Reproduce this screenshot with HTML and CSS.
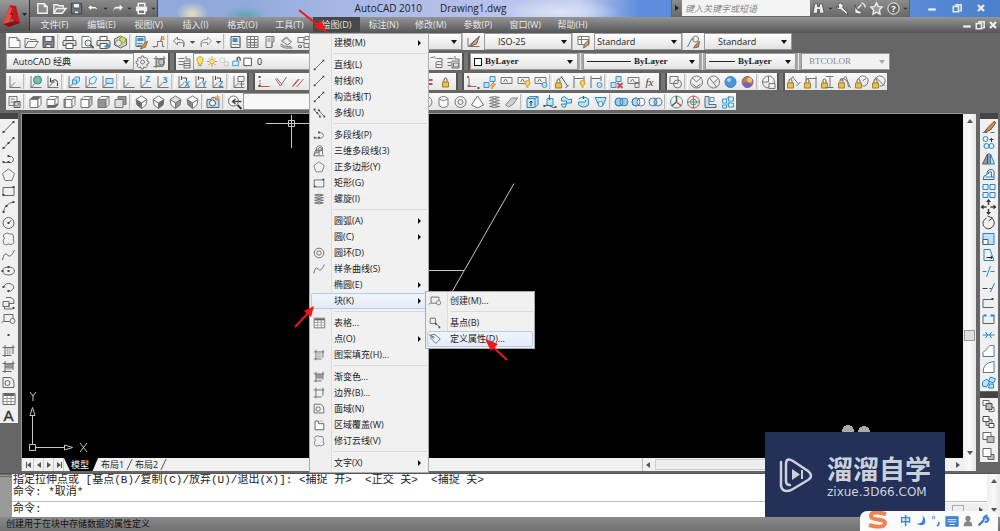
FILE: index.html
```html
<!DOCTYPE html>
<html lang="zh-CN">
<head>
<meta charset="utf-8">
<title>AutoCAD 2010 - Drawing1.dwg</title>
<link rel="stylesheet" href="styles.css">
</head>
<body>
<div class="app">
  <header class="titlebar">
    <button class="app-button" aria-label="AutoCAD">
      <svg viewBox="0 0 30 31"><path d="M3 24 10 5l6 1 4 17-5 1-2-5-4 1-1 6z" fill="#c4171c"/><path d="M10 5 3 24l5 1 5-13z" fill="#e84a45"/><path d="m10 15 2-5 1 5zM3 24l6 3 11-4-5-2z" fill="#8d0d12"/><path d="M22 13h5l-2.500 3z" fill="#222"/></svg>
    </button>
    <div class="quick light" data-icons="new open save undo drop redo drop print drop"></div>
    <h1 class="caption"><span>AutoCAD 2010</span><span>Drawing1.dwg</span></h1>
    <div class="infocenter">
      <span class="play"></span>
      <input class="search" type="text" aria-label="搜索" placeholder="键入关键字或短语">
      <div class="info-icons light" data-icons="binoc drop key dish star help drop"></div>
    </div>
    <div class="window-buttons" data-icons="wmin wmax wclose"></div>
  </header>

  <nav class="menubar">
    <div class="menu-head"><button>文件(F)</button></div>
    <div class="menu-head"><button>编辑(E)</button></div>
    <div class="menu-head"><button>视图(V)</button></div>
    <div class="menu-head"><button>插入(I)</button></div>
    <div class="menu-head"><button>格式(O)</button></div>
    <div class="menu-head"><button>工具(T)</button></div>
    <div class="menu-head open"><button>绘图(D)</button>
      <div class="menu">
        <button class="item more">建模(M)</button>
        <hr>
        <button class="item" data-icon="line">直线(L)</button>
        <button class="item" data-icon="line">射线(R)</button>
        <button class="item" data-icon="xline">构造线(T)</button>
        <button class="item" data-icon="mline">多线(U)</button>
        <hr>
        <button class="item" data-icon="pline">多段线(P)</button>
        <button class="item" data-icon="pline3">三维多段线(3)</button>
        <button class="item" data-icon="polygon">正多边形(Y)</button>
        <button class="item" data-icon="rect">矩形(G)</button>
        <button class="item" data-icon="helix">螺旋(I)</button>
        <hr>
        <button class="item more">圆弧(A)</button>
        <button class="item more">圆(C)</button>
        <button class="item" data-icon="donut">圆环(D)</button>
        <button class="item" data-icon="spline">样条曲线(S)</button>
        <button class="item more">椭圆(E)</button>
        <div class="branch">
          <button class="item more active">块(K)</button>
          <div class="menu submenu">
            <button class="item" data-icon="block">创建(M)...</button>
            <hr>
            <button class="item" data-icon="base">基点(B)</button>
            <button class="item active" data-icon="tag">定义属性(D)...</button>
          </div>
        </div>
        <hr>
        <button class="item" data-icon="table">表格...</button>
        <button class="item more">点(O)</button>
        <button class="item" data-icon="hatch">图案填充(H)...</button>
        <hr>
        <button class="item" data-icon="gradient">渐变色...</button>
        <button class="item" data-icon="boundary">边界(B)...</button>
        <button class="item" data-icon="region">面域(N)</button>
        <button class="item" data-icon="wipe">区域覆盖(W)</button>
        <button class="item" data-icon="cloud">修订云线(V)</button>
        <hr>
        <button class="item more">文字(X)</button>
      </div>
    </div>
    <div class="menu-head"><button>标注(N)</button></div>
    <div class="menu-head"><button>修改(M)</button></div>
    <div class="menu-head"><button>参数(P)</button></div>
    <div class="menu-head"><button>窗口(W)</button></div>
    <div class="menu-head"><button>帮助(H)</button></div>
    <div class="mdi" data-icons="wmin wmax wclose"></div>
  </nav>

  <section class="toolbars">
    <div class="row">
      <div class="tools" data-icons="new open save | print preview publish dwf | match brush | undo drop redo drop | props grid palette sheets blocks"></div>
      <span class="grip"></span>
      <label class="combo text-style"><select aria-label="文字样式"><option>Standard</option></select></label>
      <div class="tools wide" data-icons="dimstyle"></div>
      <label class="combo style"><select aria-label="标注样式"><option>ISO-25</option></select></label>
      <div class="tools wide" data-icons="tablestyle"></div>
      <label class="combo style near"><select aria-label="表格样式"><option>Standard</option></select></label>
      <div class="tools wide" data-icons="leader"></div>
      <label class="combo style"><select aria-label="多重引线样式"><option>Standard</option></select></label>
    </div>
    <div class="row">
      <label class="combo workspace-name"><select aria-label="工作空间"><option>AutoCAD 经典</option></select></label>
      <div class="tools" data-icons="gear wspace"></div>
      <span class="grip"></span>
      <div class="tools" data-icons="layers"></div>
      <label class="combo layer"><span class="layer-icons" data-icons="bulb sun freeze unlock square"></span><select aria-label="图层"><option>0</option></select></label>
      <div class="tools" data-icons="layerprev layerstate"></div>
      <span class="grip"></span>
      <label class="combo serif color"><span class="swatch"></span><select aria-label="颜色"><option>ByLayer</option></select></label>
      <span class="grip thin"></span>
      <label class="combo serif linetype"><span class="sample"></span><select aria-label="线型"><option>ByLayer</option></select></label>
      <span class="grip thin"></span>
      <label class="combo serif weight"><span class="sample short"></span><select aria-label="线宽"><option>ByLayer</option></select></label>
      <span class="grip thin"></span>
      <label class="combo serif off"><select aria-label="打印样式" disabled><option>BTCOLOR</option></select></label>
    </div>
    <div class="row">
      <div class="tools" data-icons="ucs | world ucsprev | ucsface ucsobj ucsview | ucs ucsz ucs3 | ucsx ucsy ucszr | ucsapply"></div>
      <span class="grip"></span>
      <div class="tools constraints"><span data-icons="perp check parallel"></span><span data-icons="equal lock"></span></div>
      <span class="grip"></span>
      <div class="tools" data-icons="coinc auto show showall hideall | lockdim lockone locktwo | delcon dimcon fx"></div>
      <span class="grip"></span>
      <div class="tools" data-icons="wire2d | wire3d hidden ball real | styles"></div>
      <span class="grip"></span>
      <div class="tools" data-icons="cal chor cver cang crad cdia"></div>
    </div>
    <div class="row">
      <div class="tools" data-icons="views | boxtop boxbottom boxleft boxright boxfront boxback | isosw isose isone isonw | camera | zoomprev"></div>
      <label class="combo view"><select aria-label="视图"><option></option></select></label>
      <span class="grip"></span>
      <div class="tools modeling" data-icons="circle cyl donut pyramid helix plane | extrude presspull sweep revolve loft | union subtract intersect | move3d rotate3d align3d array3d"></div>
    </div>
  </section>

  <main class="workspace">
    <aside class="side" data-icons="line xline pline polygon rect arc circle2 cloud spline ellipse earc insert block point hatch gradient region table text"></aside>
    <section class="document">
      <div class="canvas">
        <svg class="drawing" width="941" height="344">
          <g fill="none" stroke="#c8c8c8">
            <path d="M244 9.500h43M269.500 1v33M266.500 6.500h6v6h-6zM492 69.500 430 178M400 156.500h42M7.500 330.500h6v6h-6zM10.500 330v-29M8 301.500h5l-2.500-8zM14 333.500h28M42.500 331v5l8-2.500z"/>
            <path d="m8 278 3 4 3-4M11 282v5M58 329l7 9M65 329l-7 9"/>
          </g>
        </svg>
      </div>
      <div class="tabs">
        <button class="nav first" aria-label="第一个"></button><button class="nav prev" aria-label="上一个"></button><button class="nav next" aria-label="下一个"></button><button class="nav last" aria-label="最后一个"></button>
        <button class="tab current">模型</button><button class="tab">布局1</button><button class="tab">布局2</button>
        <div class="hscroll"><i class="tri left"></i><b class="thumb"></b><i class="tri right"></i></div>
      </div>
    </section>
    <div class="vscroll"><i class="tri up"></i><b class="thumb"></b><i class="tri down"></i></div>
    <div class="right-tools">
      <aside class="side" data-icons="erase copy mirror offset array move rotate scale stretch trim extend breakpt break join chamfer fillet explode"></aside>
      <aside class="side order" data-icons="front back above under"></aside>
    </div>
  </main>

  <section class="command">
    <div class="command-grip"></div>
    <div class="command-text">
      <pre class="history">指定拉伸点或 [基点(B)/复制(C)/放弃(U)/退出(X)]: &lt;捕捉 开&gt;  &lt;正交 关&gt;  &lt;捕捉 关&gt;
命令: *取消*</pre>
      <div class="prompt"><label for="cmd">命令:</label><input id="cmd" type="text"><div class="cmd-scroll"><i class="tri left"></i><b class="thumb"></b><i class="tri right"></i></div></div>
    </div>
    <div class="vscroll"><i class="tri up"></i><i class="tri down"></i></div>
  </section>
  <footer class="status">创建用于在块中存储数据的属性定义</footer>

  <div class="ears"></div>
  <div class="brand">
    <svg viewBox="0 0 34 38"><g fill="none" stroke="#ccd0dc" stroke-width="2.500" stroke-linecap="round"><path d="M2 6v24q1 5 6 5 3 0 6-2l15-9q6-4 0-9L14 5Q7 1 7 8v17q0 4 4 4"/></g><path d="m13 13 8 5.500-8 5.500zM22 14h2v9h-2z" fill="#ccd0dc"/></svg>
    <div class="brand-text"><strong>溜溜自学</strong><span>zixue.3D66.COM</span></div>
  </div>
  <div class="ime"><svg class="sogou" viewBox="0 0 24 20"><path d="M20 3Q5-1 5 5c0 5 14 2 14 7 0 5-10 4-16 2" fill="none" stroke="#ef8354" stroke-width="4"/></svg><span class="zh">中</span><span class="ime-icons" data-icons="moon comma keyboard person wrench"></span></div>
  <svg class="marks" width="540" height="370"><g stroke="#f01818" stroke-width="2" fill="#f01818"><path d="m299 10 21 17M295 327l15-16M507 360l-15-14"/><path stroke="none" d="m327 32-13-5 7-7zM314 306l-3 11-7-6zM485 339l13 5-7 7z"/></g></svg>
</div>
<script src="script.js"></script>
</body>
</html>
```
FILE: styles.css
```css
* { box-sizing: border-box; }
body { margin: 0; background: #666; font: 9px/16px "Open Sans", "Noto Sans CJK SC", sans-serif; color: #222; }
button, input, select { font: inherit; color: inherit; margin: 0; padding: 0; border: 0; background: none; border-radius: 0; }
svg { display: block; }
.app { position: relative; min-height: 100vh; display: flex; flex-direction: column; overflow: hidden; }

.titlebar { height: 17px; display: flex; align-items: stretch; background:
  radial-gradient(ellipse 16px 12px at 192px 14px, #e8dfc0, transparent),
  radial-gradient(ellipse 22px 10px at 245px 16px, #5fa3b4, transparent),
  radial-gradient(ellipse 60px 14px at 560px 12px, #dce4f8, transparent),
  linear-gradient(90deg, #8fa8d8 0, #93abdc 25%, #a9b9e6 36%, #b9c3ec 50%, #c0cbee 58%, #5c8cdb 64%, #5b8bd6 90%, #4a80cc); }
.app-button { width: 30px; height: 31px; position: relative; z-index: 2; background: linear-gradient(#999, #555); border-right: 1px solid #333; }
.app-button svg { width: 30px; height: 31px; }
.quick { display: flex; flex: none; align-items: center; width: 128px; padding-left: 4px; background: linear-gradient(#8a8a8a, #666); border-right: 1px solid #444; }
.light button { flex: none; width: 17px; }
.light svg { width: 17px; height: 15px; }
.light .drop { width: 7px; }
.light .drop svg { width: 7px; }
.caption { margin: 0; flex: 1; display: flex; gap: 18px; justify-content: center; padding-left: 32px; font-size: 10px; font-weight: 400; line-height: 17px; }
.infocenter { display: flex; flex: none; background: linear-gradient(#8c8c8c, #6a6a6a); width: 239px; border: 1px solid #666; border-top: 0; }
.play { width: 10px; padding: 5px 3px; }
.play::before { content: ""; display: block; border: 3px solid transparent; border-left: 4px solid #222; border-right: 0; }
.search { width: 128px; background: #f4f4f4; padding-left: 3px; font-style: italic; line-height: 15px; }
.search::placeholder { color: #888; }
.info-icons { display: flex; align-items: center; }
.window-buttons { width: 90px; flex: none; display: flex; justify-content: space-between; padding: 0 13px 2px 16px; align-items: center; }

.menubar { position: relative; z-index: 1; height: 16px; display: flex; padding-left: 31px; background: linear-gradient(#959595, #565656); color: #e6e6e6; }
.menu-head { position: relative; }
.menu-head > button { padding: 0 8px; height: 15px; min-width: 47px; white-space: nowrap; line-height: 15px; }
.menu-head.open > button { background: #484848; }
.mdi { margin-left: auto; display: flex; gap: 1px; align-items: center; padding-right: 1px; }
.mdi button, .window-buttons button { width: 12px; }
.mdi svg, .window-buttons svg { width: 12px; height: 12px; }
.menu { position: absolute; top: 16px; left: -4px; width: 120px; padding: 1px; background: #f1f1f1; border: 1px solid #aaa; color: #222; box-shadow: inset 21px 0 0 #efefef, inset 22px 0 0 #dedede; line-height: 16px; }
.menu hr { margin: 2px 0 3px 23px; border: 0; height: 1px; background: #dadada; }
.item { display: flex; align-items: center; width: 100%; height: 16px; padding-left: 23px; text-align: left; white-space: nowrap; position: relative; }
.item svg { position: absolute; left: 1px; top: 1px; width: 14px; height: 14px; }
.item.more::after { content: ""; margin-left: auto; margin-right: 6px; border: 3px solid transparent; border-left: 3px solid #111; border-right: 0; }
.item.active { background: linear-gradient(#f1f5fc, #e3ebf8); box-shadow: inset 0 0 0 1px #b4cdec; border-radius: 2px; }
.branch { position: relative; }
.submenu { left: 114px; top: -2px; width: 110px; z-index: 2; }

.toolbars { display: flex; flex-direction: column; gap: 3px; padding-left: 6px; padding-bottom: 3px; }
.row { display: flex; height: 17px; align-items: stretch; }
.tools { display: flex; flex: none; background: linear-gradient(#fafafa, #e6e6e6); }
.tools button { width: 17px; height: 17px; }
.tools .drop { width: 9px; }
.tools.wide { width: 22px; justify-content: center; border-left: 1px solid #bbb; }
.tools svg { width: 17px; height: 16px; opacity: .88; }
.tools .drop svg { width: 9px; }
.rule { width: 4px; height: 15px; margin-top: 1px; border-left: 1px solid #bbb; border-right: 1px solid #fff; background: #e8e8e8; flex: none; }
.grip { width: 8px; flex: none; border-left: 2px solid #555; border-right: 2px solid #555; background: #757575; }
.grip.thin { width: 5px; border-color: #aaa; background: #e8e8e8; }
.constraints { width: 201px; justify-content: space-between; padding-right: 2px; }
.constraints span, .layer-icons { display: flex; }
.combo { flex: none; display: flex; align-items: center; padding: 0 4px 0 6px; background: linear-gradient(#fff, #e2e2e2); border: 1px solid #999; }
.combo::after { content: ""; border: 3px solid transparent; border-top: 4px solid #111; border-bottom: 0; }
.combo select { appearance: none; flex: 1; min-width: 0; line-height: 15px; outline: 0; }
.text-style { width: 142px; }
.style { width: 88px; padding-left: 13px; }
.style.near { padding-left: 2px; }
.workspace-name { width: 128px; }
.layer { width: 235px; padding-left: 0; }
.layer-icons svg { width: 12px; height: 15px; }
.layer-icons button { width: 12px; }
.layer select { padding-left: 3px; }
.serif { font-family: "Liberation Serif", serif; font-weight: 700; padding-left: 3px; }
.swatch { width: 8px; height: 8px; border: 1px solid #111; background: #fff; margin-right: 3px; }
.sample { width: 44px; height: 1px; background: #222; margin-right: 3px; }
.sample.short { width: 26px; }
.color { width: 108px; } .linetype { width: 117px; } .weight { width: 91px; }
.off { width: 89px; padding-left: 7px; background: #f2f2f2; font-weight: 400; color: #888; }
.off select { opacity: 1; }
.off::after { border-top-color: #aaa; }
.view { width: 80px; background: #f8f8f8; }
.modeling { width: 405px; justify-content: flex-end; }

.workspace { flex: 1; display: flex; }
.side { width: 18px; display: flex; flex-direction: column; align-self: flex-start; border-top: 6px solid #444; background: #f0f0f0; }
.side button { height: 16px; width: 17px; }
.side svg { width: 17px; height: 16px; }
.document { flex: 1; min-width: 0; display: flex; flex-direction: column; margin-left: 3px; border-left: 1px solid #999; border-top: 1px solid #999; }
.canvas { flex: 1; position: relative; background: #000; overflow: hidden; }
.drawing { position: absolute; left: 0; top: 0; }
.tabs { height: 13px; display: flex; align-items: stretch; background: #f0f0f0; line-height: 12px; padding-left: 2px; }
.nav { width: 10px; display: flex; align-items: center; justify-content: center; border-right: 1px solid #ccc; }
.nav::before { content: ""; border: 3px solid transparent; }
.nav.prev::before, .nav.first::before { border-right: 4px solid #555; border-left: 0; }
.nav.next::before, .nav.last::before { border-left: 4px solid #555; border-right: 0; }
.nav.first::before { box-shadow: -1px 0 0 #555; }
.nav.last::before { box-shadow: 1px 0 0 #555; }
.tab { width: 34px; padding-left: 3px; text-align: left; position: relative; color: #222; }
.tab::after { content: ""; position: absolute; right: 2px; top: 1px; height: 11px; border-right: 1px solid #555; transform: skewX(-25deg); }
.tab.current { padding-left: 7px; background: #000; color: #fff; clip-path: polygon(0 0, 100% 0, 84% 100%, 18% 100%); }
.hscroll { margin-left: auto; width: 321px; background: #f0f0f0; border-left: 1px solid #bbb; display: flex; align-items: center; gap: 5px; padding: 0 3px; }
.hscroll .thumb { width: 190px; height: 11px; background: #eee; border: 1px solid #ccc; }
.hscroll .right, .cmd-scroll .right { margin-left: auto; }
.tri { flex: none; border: 3px solid transparent; width: 0; height: 0; }
.tri.up { border-bottom: 4px solid #555; border-top: 0; }
.tri.down { border-top: 4px solid #555; border-bottom: 0; }
.tri.left { border-right: 4px solid #555; border-left: 0; }
.tri.right { border-left: 4px solid #555; border-right: 0; }
.vscroll { width: 13px; flex: none; background: linear-gradient(90deg, #eee, #f8f8f8, #e8e8e8); display: flex; flex-direction: column; justify-content: space-between; align-items: center; padding: 5px 0; }
.workspace > .vscroll { margin-top: 1px; padding-bottom: 16px; }
.workspace > .vscroll .thumb { width: 11px; height: 11px; margin-top: 194px; margin-bottom: 98px; border: 1px solid #999; background: #e0e0e0; }
.right-tools { width: 24px; padding-left: 4px; }
.order { margin-top: 1px; }

.command { height: 44px; margin-top: 2px; display: flex; background: #fff; border-top: 1px solid #555; }
.command-grip { width: 12px; background: #999; border-top: 3px double #666; }
.command-text { flex: 1; min-width: 0; font: 11px/12px "Liberation Mono", "Noto Sans CJK SC", monospace; }
.history { margin: 0; height: 28px; padding-left: 1px; font: inherit; border-bottom: 1px solid #bbb; overflow: hidden; }
.prompt { display: flex; height: 15px; line-height: 15px; padding-left: 1px; align-items: center; }
.prompt input { flex: 1; outline: 0; }
.cmd-scroll { width: 330px; height: 14px; background: #eee; display: flex; align-items: center; gap: 3px; padding: 0 4px; }
.cmd-scroll .left { visibility: hidden; }
.cmd-scroll .thumb { width: 12px; height: 10px; border: 1px solid #aaa; margin-left: auto; }
.cmd-scroll .right { margin-left: 12px; }
.cmd-scroll { width: 215px; }
.status { height: 14px; padding-left: 6px; line-height: 14px; background: linear-gradient(#8a8a8a, #707070); color: #111; }

.ears { position: absolute; left: 842px; bottom: 94px; width: 28px; height: 12px; background: radial-gradient(circle at 6px 6px, #aaa 6px, transparent 6px), radial-gradient(circle at 22px 7px, #aaa 6px, transparent 6px); }
.brand { position: absolute; left: 765px; bottom: 14px; width: 180px; height: 85px; padding: 0 14px; display: flex; align-items: center; gap: 14px; background: #233057; color: #ccd0dc; }
.brand svg { width: 34px; height: 38px; flex: none; }
.brand-text { display: flex; flex-direction: column; white-space: nowrap; }
.brand-text strong { font: 700 26px/34px "Noto Sans CJK SC", sans-serif; }
.brand-text span { font: 12px/14px "DejaVu Sans", sans-serif; }
.ime { position: absolute; left: 860px; bottom: 0; width: 138px; height: 20px; padding: 0 8px 0 6px; display: flex; align-items: center; background: #fafafa; border-radius: 7px 7px 0 0; color: #3e82d4; }
.sogou { width: 24px; height: 20px; }
.zh { margin-left: 10px; font-size: 11px; font-weight: 700; }
.ime-icons { display: flex; flex: 1; justify-content: space-between; padding-left: 3px; }
.ime-icons button { width: 14px; height: 14px; }
.ime-icons svg { width: 14px; height: 14px; }
.marks { position: absolute; left: 0; top: 0; z-index: 3; pointer-events: none; }
```
FILE: script.js
```javascript
const G = '#666', B = '#2684cc', Y = '#e3a51c', R = '#c93636', L = '#bfe3f8';
const p = (d, s = G, f = 'none', w = 1) => `<path d="${d}" stroke="${s}" fill="${f}" stroke-width="${w}"/>`;
const c = (x, y, r, s = G, f = 'none') => `<circle cx="${x}" cy="${y}" r="${r}" stroke="${s}" fill="${f}"/>`;
const dots = (...a) => a.map(([x, y]) => p(`M${x - 1} ${y - 1}h2v2h-2z`, 'none', '#444')).join('');
const t = (s, x, y, col = B, size = 8) => `<text x="${x}" y="${y}" font-size="${size}" font-weight="700" fill="${col}" stroke="none">${s}</text>`;
const axes = p('M3.5 2v11.500H14M3.500 13.500l5-5');
const padlock = (x, y) => p(`M${x + 1.5} ${y}v-2q0-2 1.500-2t1.500 2v2`, '#5b4a16') + p(`M${x} ${y}h6v5h-6z`, '#9b7310', '#edbb3a');
const smallBulb = c(12, 9, 2.500, '#d28b12', '#ffd24a') + p('M11 13h2', '#8a6a20');
const glass = p('M2.500 3.500h11v6h-11zM5 8l2-3 2 3');
const cube = (f1, f2, f3) => p('M2.500 5.500h8v8h-8z', G, f1) + p('m2.500 5.500 3-3h8l-3 3z', G, f2) + p('m10.500 5.500 3-3v8l-3 3z', G, f3);
const iso = (a, b, d) => p('m8 2 5.500 3.500L8 9 2.500 5.500z', G, a) + p('M2.500 5.500 8 9v5.500L3.500 11z', G, b) + p('M13.500 5.500 8 9v5.500l4.500-3.500z', G, d);
const hatchBox = p('M4.500 2v12M12.500 2v9M2 4.500h12M2 12.500h9');
const printer = p('M4.500 6V2.500h7V6M4.500 10.500v4h7v-4', '#444', '#fff') + p('M2.500 6.500q-1 0-1 1v4h3v-2h7v2h3v-4q0-1-1-1z', '#444', '#ddd');

const icons = {
  new: p('M2.500 3.500h8l3 3v7h-11zM10.500 3.500v3h3', G, '#fff'),
  open: p('M1.500 13.500v-9h4l1 1h6v2M1.500 13.500l3-6h10.500l-4 6z', G, '#f4f4f4'),
  save: p('M2.500 2.500h11v11h-11z', '#3a3d44', '#72777f') + p('M4.500 2.500h7v5h-7zM5.500 10.500h5v3h-5z', '#4a4d54', '#e8eef4'),
  undo: p('M6 3 2 7l4 4V8.500h4q3 0 2 4.500 3-8-6-7.500z', '#666', '#f6f6f6'),
  redo: p('m10 3 4 4-4 4V8.500H6q-3 0-2 4.500-3-8 6-7.500z', '#888', '#f6f6f6'),
  drop: '<path d="M3 6h10l-5 5z" fill="#333"/>',
  print: printer,
  preview: p('M3.500 2.500h7l2 2v9h-9z', G, '#fff') + c(9.500, 9, 3, '#555', '#e8f2fa') + p('m12 11 3 3', '#444', 'none', 2),
  publish: printer + p('M9 11.500h3v-2.500l3.500 3.500-3.500 3v-2H9z', 'none', B),
  dwf: p('m8 2 6 3v6l-6 3-6-3V5z', '#555', '#c7d7a0') + c(10, 6, 3, '#86a628', '#cddb52') + c(6, 9, 3, '#6a7a85', '#e8edf0'),
  match: p('M2.500 2.500h9v10h-9z', '#2567a5', '#dceaf5') + p('M4 4h6v3H4z', 'none', B) + p('M4 9.500h5M4 11.500h4') + p('m14 7-5 4-2 4 5-2z', '#8a5720', '#d8873b'),
  brush: p('M3 12.500h4v-5h5v5h2M2 12l2 2M12 3l-2 4M10 5l4-3') + p('m11 2 3 3-3 1z', '#e47a1d', '#ffb04a'),
  props: p('M3.500 2.500h9v11h-9z', '#444', '#e8f0f6') + p('M5 4h5v4H5z', 'none', B) + p('M5 10.500h6M12.500 3v11', '#777'),
  grid: p('M2.500 2.500h11v11h-11zM2.500 5.500h11M6 2v12M10 2v12M3 8.500h10M3 11h10'),
  palette: p('M4.500 2.500h8v5l-2 1v5h-6zM10.500 3v10M6 5h3M6 7h3'),
  sheets: p('m3 7 5-4 5 5-4 3zM2 10l4 2 7 1M2 12l5 2 7 0') + p('M4 7.500 8 4l4 4', '#888'),
  blocks: p('M2.500 3.500h6v5h-6zM9.500 2.500h4v3h-4zM8.500 9.500h5v4h-5zM3 11.500h3v2H3z'),
  dimstyle: p('M2.500 4v8.500H14M3 12l9-8') + p('m14 2-6 6-3 4 6-2z', '#6b4a2f', '#c49a73'),
  tablestyle: p('M2.500 2.500h11v8h-11zM2.500 5.500h11M6 3v8', G, '#fff') + p('m13 6-4 4-1 4 5-3z', '#7b5a34', '#cf9457'),
  leader: p('m2 13 4-8h3') + c(10, 5, 3) + p('m14 7-4 4-2 3 5-1z', '#7b5a34', '#b97b4f'),
  gear: c(8, 8, 2) + p('m7 2 2 0 .5 2 2-.5 1.500 1.500-.8 2 2 .7v2l-2 .5.7 2-1.500 1.500-2-.8-.5 2h-2l-.7-2-2 .7-1.400-1.400.8-2-2-.8v-2l2-.5-.7-2L4.500 3.500l2 .8z'),
  wspace: hatchBox + p('M5 5h7v7H5z', '#777', '#bbb') + c(10, 8, 3),
  layers: p('M2 4.500h6M2 7.500h5M2 10.500h5M9.500 2v3h4v9h-6v-7h6M7.500 9.500h6M7.500 11.500h6'),
  bulb: p('M5.500 11.500V9Q3 7 4 4q4-5 8 0 1 3-1.500 5v2.500z', '#b58a18', '#ffe36a') + p('M6 13.500h4'),
  sun: c(8, 8, 3, '#c0942c', '#ffe982') + p('M8 1v3M8 12v3M1 8h3M12 8h3M3 3l2 2M11 11l2 2M13 3l-2 2M3 13l2-2', '#9d7a20'),
  freeze: p('M2.500 3.500h6v6h-6z', '#ccc') + c(11, 11, 3, '#bbb'),
  unlock: p('M3.500 7.500h8v6h-8z', B, '#d5effc') + p('M9.500 7V4q2-4 4 0v3', '#234', 'none', 1.500),
  square: p('M2.500 3.500h10v10h-10z', '#222', '#fff'),
  layerprev: p('M2 3.500h3M5 2l3 3M8.500 4.500h5v9h-6V8M8 7.500h5M8 10.500h5'),
  layerstate: p('M2 4.500h6M2 8.500h4M2 11.500h4M9.500 2v3h4v9h-7v-7h7M7 10.500h6') + p('M8 9h5v4H8z', G, '#ddd'),
  ucs: axes,
  world: axes + c(10, 6, 4, '#287a93', '#54b5c7') + p('m8 4 3 0 1 3-3 2z', 'none', '#7cc45c'),
  ucsprev: axes + p('M7 7q7-4 6 5M6 4v4h4', '#222'),
  ucsface: axes + p('m7 6 3-3h4v4l-3 3H7zM7 6h4v4', B, L),
  ucsobj: axes + p('M7 9V5q5-4 7-1 0 5-4 6z', B, '#e8f6ff'),
  ucsview: axes + p('M6.500 4.500h7v5h-7z', B, L),
  ucsz: axes + t('Z', 8, 8), ucs3: axes + t('3', 8, 9, B, 9),
  ucsx: axes + t('X', 9, 13) + p('M7 4h4v3M6 2v4', '#333'),
  ucsy: axes + t('Y', 9, 13) + p('M7 4h4v3M6 2v4', '#333'),
  ucszr: axes + t('Z', 9, 13) + p('M7 4h4v3M6 2v4', '#333'),
  ucsapply: axes + p('M7.500 2.500h6v5h-6zM9 10h5M11 8v6'),
  perp: p('M4.500 2v2M4.500 6v2', G) + p('M3 12.500h11M4.500 9v3', R) + dots([4, 12], [4, 3]),
  check: p('m3 5 5 7 6-9', G) + p('m4 4 5 6', R), parallel: p('m3 13 7-8', G) + p('m7 13 7-8M3 12l6-7', R),
  equal: p('M4 6h8M4 10h8', R, 'none', 2), lock: padlock(5, 8),
  coinc: p('M4.500 4v8.500H12', G) + p('M3.500 2v2M3 12h3', R, 'none', 2) + dots([14, 14]),
  auto: p('M8.500 2.500h5v5h-5zM2.500 8.500h5v5h-5z', B, L) + p('m12 8-3 4h2l-1 3 4-5h-2z', '#d88918', '#ffc83d'),
  show: glass, showall: glass + smallBulb, hideall: glass + c(12, 11, 2.500, B, L),
  lockdim: padlock(2, 9) + p('m8 3 6 9M6 5l3-3M12 14l3-3', '#444'),
  lockone: p('M3.500 2v12M13.500 2v5M4 4.500h9', '#555') + smallBulb,
  locktwo: p('M3.500 2v12M13.500 2v5M4 4.500h9', '#555') + c(12, 11, 2.500, B, L),
  delcon: p('M7.500 2.500h5v5h-5zM2.500 8.500h5v5h-5z', B, L) + p('m9 9 5 5m0-5-5 5', R, 'none', 2),
  dimcon: glass + p('M9.500 8.500h4v5h-4z'),
  fx: '<text x="3" y="12" font-size="11" font-style="italic" font-family="Liberation Serif" fill="#222">fx</text>',
  wire2d: p('M2.500 2.500h8v7h-8z') + c(10, 10, 4),
  wire3d: c(8, 8, 6) + p('m4 4 4 4 5-5M4 10l4 3 4-3'), hidden: c(8, 8, 6) + p('m4 4 4 5 5-5M8 9l3 4'),
  ball: c(8, 8, 5.500, '#2a6fb8', '#348bd9') + c(6.500, 6, 2, 'none', '#9ed2f6'),
  real: c(8, 8, 5.500, '#7a4f8a', '#c06a3c') + c(10, 6, 2.500, 'none', '#ffc044') + p('M3 9q5-3 10 2-4 4-8 2z', 'none', '#5e55a8'),
  styles: c(8, 8, 6) + p('M8 8V2M8 8H2') + p('M8.500 9.500h6v5h-6z', G, '#eee'),
  cal: padlock(2, 9) + p('m7 3 6 7M11 12l4-4M5 5l3-3'), chor: padlock(2, 9) + p('M3.500 2v4M13.500 2v12M4 4.500h10'),
  cver: padlock(2, 9) + p('M6 2.500h8M10.500 3v10M6 13.500h8'), cang: padlock(2, 9) + p('m5 7 4-5 5 12M4 5q7-2 8 8'),
  crad: p('M5 5a5 5 0 1 1 4 7M9 7l4-3') + padlock(2, 9), cdia: p('M5 5a5 5 0 1 1 4 7M5 3l9 9') + padlock(2, 9),
  views: p('M2.500 2.500h8v9h-8zM4 5h4M4 8h3') + p('M7.500 7.500h6v6h-6z', '#444', '#d5d5d5') + c(10, 10, 2),
  boxtop: cube('#fff', '#555', '#fff'), boxbottom: cube('#fff', '#fff', '#fff') + p('M3 12h8l2-2', '#555', 'none', 2),
  boxleft: cube('#fff', '#fff', '#fff') + p('M3.500 6v7', '#777', 'none', 2), boxright: cube('#fff', '#fff', '#bbb'),
  boxfront: cube('#888', '#eee', '#eee'), boxback: p('M5.500 2.500h8v8h-8z', G, '#888') + p('M2.500 5.500h8v8h-8z', G, '#ddd'),
  isosw: iso('#fff', '#555', '#fff'), isose: iso('#fff', '#eee', '#555'), isone: iso('#ddd', '#fff', '#888'), isonw: iso('#fff', '#777', '#fff'),
  camera: p('M1.500 5.500h4l1-2h3l1 2h3v8h-12z', '#456', '#b8dcec') + c(7, 9, 3, '#345', '#fff') + p('M12 1v6M9 4h6M10 2l4 4M14 2l-4 4', '#ea8b20'),
  zoomprev: c(7, 7, 5, '#555', '#fff') + p('m11 11 4 4', '#222', 'none', 2) + p('M15 7.500H6M9 5 6 7.500 9 10', '#333', 'none', 1.500),
  cyl: p('M3.500 4.500v7q4.500 4 9 0v-7M3.500 4.500q4.500 4 9 0-4.500-4-9 0z', G, '#fff'),
  donut: c(8, 8, 5.500) + c(8, 8, 2.500), pyramid: p('m8 2-6 9 6 3 6-3z', G, '#fff'),
  helix: p('M3 3.500q5-2 10 0-5 2-10 0m0 3q5 2 10 0-5-2-10 0m0 3q5 2 10 0-5-2-10 0m0 3q5 2 10 0-5-2-10 0'),
  plane: p('m2 11 6-7h6l-4 6-5 3z', '#777', '#ccc'),
  extrude: p('m2.500 4.500 3-2h8v8l-3 3h-8zM2.500 4.500h8v9M10.500 4.500l3-2', '#1878ad', L) + p('M6.500 12V7M5 8.500 6.500 7 8 8.500', '#111'),
  presspull: p('M5.500 4.500h6v7h-6z', B, L) + p('m2 12 4-1 7 3M8 1v5', '#444') + dots([3, 12], [14, 13]),
  sweep: p('M3 4q3-3 5 0t5 1v4H8l-1 4q-4 1-4-3h5V7H3z', '#1878ad', L), revolve: p('M3 5q5-4 10 0v6q-5 4-10 0V8h7V6', '#1878ad', L) + p('M8 2v3', '#333'),
  loft: p('M2.500 3.500h11l-2 6q-3 6-6 0z', '#1878ad', L) + c(8, 10, 2.500, '#1878ad', '#fff'),
  union: c(5.500, 8, 4, '#2878ac', '#8bcdf2') + c(10.500, 8, 4, '#2878ac', '#8bcdf2') + c(5.500, 8, 4, '#2878ac'),
  subtract: c(5.500, 8, 4, '#2878ac', '#a9d8ef') + c(10.500, 8, 4, '#669', '#fff') + c(5.500, 8, 4, '#2878ac'),
  intersect: c(5.500, 8, 4, '#3a6f90') + c(10.500, 8, 4, '#3a6f90') + p('M8 5q3 3 0 6-3-3 0-6z', B, '#8bc9ed'),
  move3d: c(8, 8, 6, '#488') + p('M8 8V2M8 8l-5 4', '#252', 'none', 1.500) + p('m8 8 5 4', R, 'none', 1.500),
  rotate3d: c(8, 8, 6, R) + c(8, 8, 3, '#2a8c5a') + p('M2 8h12M8 2v12', '#377f91'),
  align3d: p('M2.500 2.500h4v8h7v3h-11z', '#555', L) + p('M7.500 3.500h4v4h-4z', B, '#fff'),
  array3d: p('M3 5h4v4H3zM9 3h5v4H9zM3 11h4v3H3zM9 9h5v4H9zM7 5l3-3M7 11l3-3', B, '#dff3ff'),

  line: p('M3 13 13 3') + dots([3, 13], [13, 3]), xline: p('M3 13 13 3') + dots([3, 13], [8, 8], [13, 3]),
  mline: p('m2 4 7 7M7 4l7 8') + dots([3, 4], [8, 5], [9, 12], [14, 12], [6, 8]),
  pline: p('M3 11.500h8q4-3 0-6H8') + dots([3, 11], [8, 11], [8, 5]),
  pline3: p('M5 9V4q4-4 7 0v8M2 13l2-6h3v3H4zM8 13V7h4M2 13.500h12') + c(9, 6, 2),
  polygon: p('m8 2 6 4.500-2.500 7h-7L2 6.500z', '#777'), rect: p('M2.500 4.500h11v8h-11z') + dots([3, 12], [13, 4]),
  arc: p('M3 13Q4 5 13 3') + dots([3, 13], [6, 7], [13, 3]), circle2: c(8, 8, 5.500) + p('m8 8 3-3') + dots([8, 8]), circle: c(8, 8, 5.500),
  cloud: p('M4 7Q1 5 4 3t5 0q4-1 4 2t0 4q2 3-1 4t-4 0q-4 2-5-1t1-5', '#777'),
  spline: p('M2 13Q4 4 7 8t7-5'), ellipse: '<ellipse cx="8" cy="8" rx="6" ry="4" stroke="#666" fill="none"/>' + dots([2, 8], [8, 8], [8, 4]),
  earc: p('M3 8q2-5 8-3 5 4-1 7H7') + dots([3, 8], [8, 12]), insert: p('M5.500 2.500h5q4 2 3 6h-5v3h-6v-5h6v6M4 12v2h8') + dots([13, 13]),
  block: p('M3.500 3.500h9v7h-9zM3 10l-2 2') + c(12, 10, 2.500, '#777', '#eee'), point: dots([8, 8]),
  hatch: hatchBox + p('M5 6h7M5 8h7M5 10h7M7 5v7M9 5v7', '#bbb'), gradient: hatchBox + p('M5 5h7v4H5z', '#888', '#999') + p('M5 10h7', '#aaa'),
  boundary: hatchBox, region: p('M2.500 2.500h7q4 1 4 7v3h-11z') + c(7, 8, 2.500),
  table: p('M2.500 2.500h12v11h-12z', G, '#fff') + p('M2.500 7.500h12M2.500 10.500h12M6.500 3v10M10.500 3v10', '#999') + p('M3 4h11', '#666', 'none', 2),
  text: '<text x="3" y="14" font-family="Liberation Sans" font-size="15" fill="#333" stroke="#333" stroke-width=".4">A</text>',
  base: p('M2.500 2.500h6v6h-6z') + p('m9 9 4 3') + dots([13, 13], [9, 9]),
  tag: p('M4 3 3 7l6 6 5-5-6-5zM1 3l5 3') + c(6, 6, 1), wipe: p('M3.500 13.500v-10h4v3h6v7z', '#555', '#fff') + p('M9 3.500h4', '#aaa'),

  erase: p('m14 2-7 7-3 4 6-2 5-7z', '#7b4525', '#d09155') + p('M2 13.500h5M10 13.500h4', B),
  copy: c(5, 4, 2.500, B) + c(6, 11, 2.500, B) + c(11, 11, 2.500, B, '#ddf2ff') + p('M9 4.500h4M11 3v4', '#333'),
  mirror: p('M7 3v10H2z', '#555', '#999') + p('M10 3v10h4z', B, L) + p('M8.500 2v12', '#444'),
  offset: p('M2.500 12.500q0-4 4-5 0-5 4-5 4 0 3 5v5z', '#286995') + p('M5 10h8M8 7v-2h3v5', B),
  array: p('M2.500 1.500h5v5h-5zM9.500 1.500h5v5h-5zM2.500 9.500h5v5h-5zM9.500 9.500h5v5h-5z', B),
  move: p('M8 2v12M2 8h12', '#444', 'none', 1.500) + p('M8 0 5.500 3h5zM8 16l-2.500-3h5zM0 8l3-2.500v5zM16 8l-3-2.500v5z', 'none', '#333') + c(8, 8, 2, 'none', '#f0f0f0'),
  rotate: p('M11 3q5 4 1 9-5 4-9-1-2-5 3-8M7 1l5 2-4 3', '#444'), scale: p('M2.500 2.500h11v11h-11z', B, L) + p('M2.500 8.500h5v5h-5z', '#555', '#fff'),
  stretch: p('M3.500 2.500h6l4 11h-10z', B, '#eef9ff') + p('M6 10.500h6M10 9l2 1.500-2 1.500', '#222'),
  trim: p('M2 8.500h4M10 8.500h4M10 3 6 14', B), extend: p('M2 9.500h5M9 9.500h2', '#444') + p('m14 4-4 9', B),
  breakpt: p('M12 4.500H2.500v8H13', '#4c6878') + dots([12, 4]), break: p('M2.500 4.500v8h11v-8', '#4c6878') + p('M3 4.500h3M10 4.500h4', B, 'none', 2),
  join: p('M2 8h12M5 5l2 3-2 3M11 5 9 8l2 3', B), chamfer: p('M13.500 2.500v11h-11v-4l7-7z', '#527c96', '#fff'),
  fillet: p('M13.500 2.500v11h-11q0-10 11-11z', '#527c96', '#fff'), explode: p('m2 7 4-3 3 3-3 5-4-1zM8 6l2-4 5 2-2 4zM9 9h4v4H8z', B, L),
  front: p('M2.500 2.500h6v5h-6zM8.500 9.500h5v4h-5z', G, '#fff') + p('M5.500 5.500h6v6h-6z', '#444', '#b8c0c6'),
  back: p('M5.500 5.500h6v6h-6z', G, '#ccc') + p('M2.500 2.500h6v5h-6zM8.500 9.500h5v4h-5z', '#444', '#fff'),
  above: p('M2.500 2.500h8v7h-8z', G, '#fff') + p('M6.500 6.500h7v6h-7z', '#666', '#bbb'), under: p('M7.500 8.500h6v5h-6z', '#666', '#bbb') + p('M2.500 2.500h8v8h-8z', G, '#fff'),

  wmin: p('M3 10h10', '#eee', 'none', 3), wmax: p('M5.500 3.500h8v8h-2M3 6h7v7H3z', '#eee', 'none', 2), wclose: p('m4 4 8 8m0-8-8 8', '#eee', 'none', 3),
  binoc: p('M4 3h3v3h2V3h3l2 10H9V9H7v4H2z', '#555', '#eee'), key: p('m3 3 3-1 3 3-1 2 6 6-2 1-6-5-3 0-2-3 3 1z', '#555', '#eee'),
  dish: p('M3 4q1 7 8 7l-3 3-5-1z', '#555', '#eee') + p('m6 8 4-4M10 2q4 1 4 5', '#eee', 'none', 1.500), star: p('m8 2 2 4 4 .5-3 3 .8 4.500L8 12l-3.800 2 .8-4.500-3-3L6 6z', '#eee', '#999', 1.500),
  help: c(8, 8, 6, '#fff', '#666') + t('?', 5.5, 12, '#fff', 10),
  moon: p('M10 2q2 9-7 9 9 5 10-3 0-4-3-6z', 'none', '#3e82d4'), comma: c(4, 4, 1.500, '#3e82d4') + p('M10 9v3l-2 2', '#3e82d4', 'none', 2),
  keyboard: p('M1 3h14v11H1z', '#3e82d4', '#3e82d4') + p('M3 6.500h10M3 9h10M5 12h6', '#fff'),
  person: c(8, 5, 3, 'none', '#888') + p('M3 14q0-6 5-6t5 6z', 'none', '#888'), wrench: p('m3 13 6-6M9 7q-1-4 3-5v3h2q1 4-4 4', '#3e82d4', 'none', 2.5),
};

// The quick access bar is dark, so its outlines are drawn pale.
const pale = {
  new: p('M3 3h7l3 3v7H3zM10 3v3h3', '#f0f0f0', '#8a8a8a', 1.5),
  open: p('M2 13V4h4l1 1h5v2M2 13l3-5h10l-4 5z', '#f0f0f0', '#8a8a8a', 1.5),
  print: p('M4.500 6V2.500h7V6', '#fff', '#888', 1.5) + p('M2 6h12v5H2z', 'none', '#f0f0f0') + p('M4.500 9.500h7v4h-7z', '#fff', '#777', 1.5),
};

const draw = (name, set = icons) => `<svg viewBox="0 0 16 16" aria-hidden="true">${set[name] || icons[name]}</svg>`;

document.querySelectorAll('[data-icons]').forEach((bar) => {
  const set = bar.classList.contains('light') ? pale : icons;
  bar.dataset.icons.split(' ').forEach((name) => {
    if (name === '|') {
      const rule = document.createElement('span');
      rule.className = 'rule';
      bar.append(rule);
      return;
    }
    const button = document.createElement('button');
    button.type = 'button';
    button.className = name === 'drop' ? 'drop' : 'tool';
    button.setAttribute('aria-label', name);
    button.innerHTML = draw(name, set);
    bar.append(button);
  });
});

document.querySelectorAll('[data-icon]').forEach((item) => {
  item.insertAdjacentHTML('afterbegin', draw(item.dataset.icon));
});
```
